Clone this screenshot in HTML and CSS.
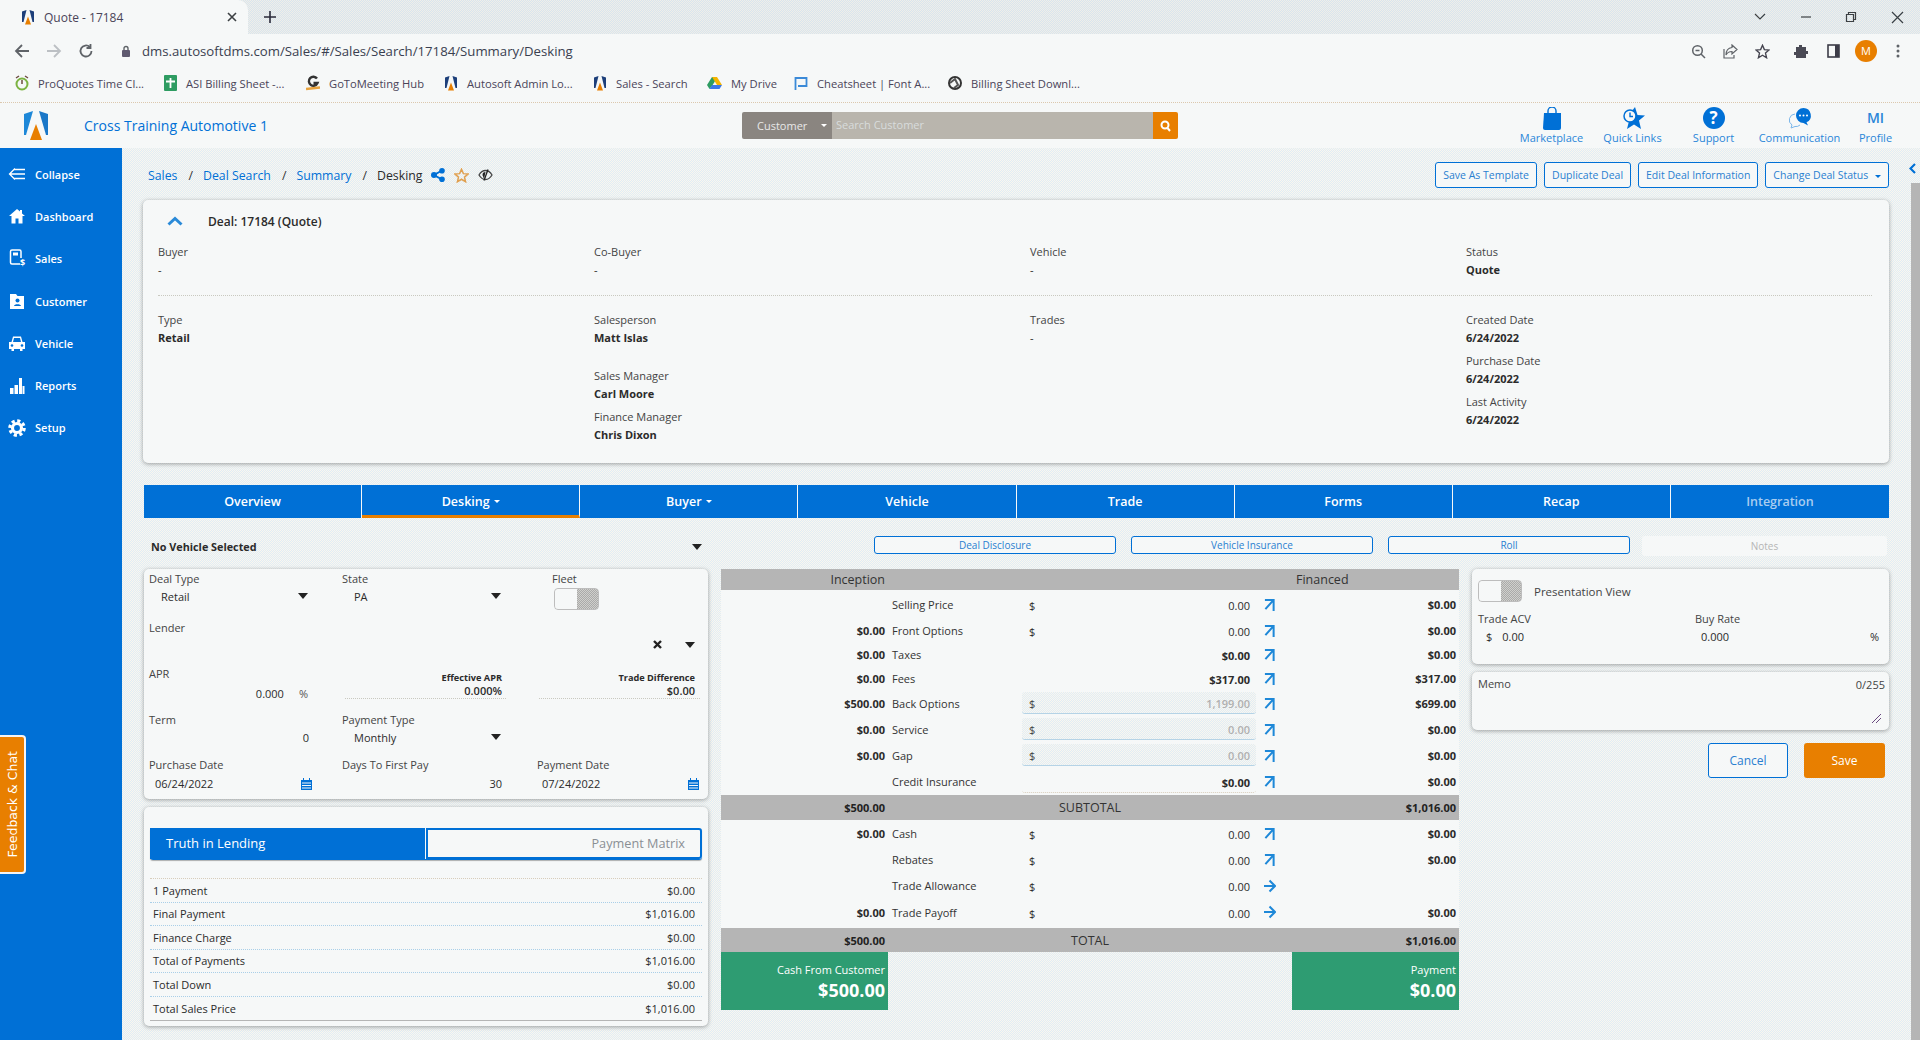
FILE: index.html
```html
<!DOCTYPE html>
<html lang="en">
<head>
  <meta charset="UTF-8" />
  <title>Quote - 17184</title>
  <link rel="stylesheet" href="styles.css">
</head>
<body>
  <svg class="defs" width="0" height="0">
    <symbol id="logo" viewBox="0 0 28 30">
      <path d="M2 3 11 0 4 24 2 24z" fill="#1e88d8"/>
      <path d="M26 3 17 0 24 24 26 24z" fill="#1b78c8"/>
      <path d="M14 13 20 29H8z" fill="#e87f00"/>
    </symbol>
    <symbol id="favicon" viewBox="0 0 28 30">
      <path d="M2 3 11 0 5 24 2 24z" fill="#1d3f7a"/>
      <path d="M26 3 17 0 23 24 26 24z" fill="#1d3f7a"/>
      <path d="M14 13 20 29H8z" fill="#e87f00"/>
    </symbol>
    <symbol id="up-right" viewBox="0 0 12 14">
      <path d="M1 2H10.500V14M10 2.500 1.500 12" fill="none" stroke="#1e88d8" stroke-width="2.200"/>
    </symbol>
    <symbol id="right" viewBox="0 0 12 14">
      <path d="M0 7H10M5.500 1.500 11 7 5.500 12.500" fill="none" stroke="#1e88d8" stroke-width="2"/>
    </symbol>
    <symbol id="calendar" viewBox="0 0 11 12">
      <path d="M0 2H2V0H3V2H8V0H9V2H11V12H0z" fill="#0070d6"/>
      <path d="M1 5H10M1 7.500H10M1 10H10" stroke="#f6f8f8" stroke-width="1"/>
    </symbol>
  </svg>

  <!-- Browser chrome -->
  <div class="tabstrip">
    <div class="tab">
      <svg class="fav" width="14" height="15"><use href="#favicon"/></svg>
      <span class="tab-title">Quote - 17184</span>
      <svg class="tab-close" width="10" height="10" viewBox="0 0 10 10"><path d="M1 1 9 9M9 1 1 9" stroke="#3c4043" stroke-width="1.600"/></svg>
    </div>
    <svg class="tab-new" width="12" height="12" viewBox="0 0 12 12"><path d="M6 0V12M0 6H12" stroke="#2a2a3a" stroke-width="1.600"/></svg>
    <div class="winctl">
      <svg width="12" height="8" viewBox="0 0 12 8"><path d="M1 1 6 6 11 1" fill="none" stroke="#3c4043" stroke-width="1.200"/></svg>
      <svg width="12" height="2" viewBox="0 0 12 2"><path d="M1 1H11" stroke="#3c4043" stroke-width="1.200"/></svg>
      <svg width="12" height="12" viewBox="0 0 12 12"><path d="M1.500 3.500H8.500V10.500H1.500zM3.500 3.500V1.500H10.500V8.500H8.500" fill="none" stroke="#3c4043" stroke-width="1.200"/></svg>
      <svg width="13" height="13" viewBox="0 0 13 13"><path d="M1 1 12 12M12 1 1 12" stroke="#3c4043" stroke-width="1.200"/></svg>
    </div>
  </div>
  <div class="toolbar">
    <svg class="nav-ic" width="16" height="14" viewBox="0 0 16 14"><path d="M15 7H2M8 1 2 7 8 13" fill="none" stroke="#5f6368" stroke-width="1.800"/></svg>
    <svg class="nav-ic" width="16" height="14" viewBox="0 0 16 14"><path d="M1 7H14M8 1 14 7 8 13" fill="none" stroke="#bcc0c4" stroke-width="1.800"/></svg>
    <svg class="nav-ic" width="16" height="16" viewBox="0 0 16 16"><path d="M13.500 8A5.500 5.500 0 1 1 11.800 4M12.500 1V5H8.500" fill="none" stroke="#5f6368" stroke-width="1.800"/></svg>
    <svg class="lock" width="10" height="12" viewBox="0 0 10 12"><path d="M3 5V3.500a2 2 0 0 1 4 0V5" fill="none" stroke="#5f6368" stroke-width="1.400"/><rect x="1" y="5" width="8" height="7" rx="1" fill="#5f5a70"/></svg>
    <span class="url">dms.autosoftdms.com/Sales/#/Sales/Search/17184/Summary/Desking</span>
    <div class="tool-right">
      <svg width="15" height="15" viewBox="0 0 15 15"><circle cx="6.500" cy="6.500" r="4.800" fill="none" stroke="#5f6368" stroke-width="1.500"/><path d="M10 10 14 14M4.500 6.500H8.500" stroke="#5f6368" stroke-width="1.500"/></svg>
      <svg width="15" height="15" viewBox="0 0 15 15"><path d="M9 1 14 5.500 9 10V7.500C6 7.500 4 9 3 11 3 7 5 4 9 3.500zM1 5V14H11V11" fill="none" stroke="#5f6368" stroke-width="1.200"/></svg>
      <svg width="15" height="15" viewBox="0 0 24 24"><path d="M12 2 15 9 22.500 9.600 16.800 14.500 18.500 22 12 18 5.500 22 7.200 14.500 1.500 9.600 9 9z" fill="none" stroke="#44444f" stroke-width="2.200"/></svg>
      <svg class="gap-l" width="14" height="15" viewBox="0 0 14 15"><path d="M5 1h3v2h4v4h2v3h-2v4H2v-3H0V8h2V3h3z" fill="#4a4a55"/></svg>
      <svg class="gap-m" width="13" height="14" viewBox="0 0 13 14"><rect x="1" y="1" width="11" height="12" fill="none" stroke="#3c3c48" stroke-width="1.600"/><rect x="8" y="1" width="4" height="12" fill="#3c3c48"/></svg>
      <span class="avatar">M</span>
      <svg class="kebab" width="4" height="14" viewBox="0 0 4 14"><circle cx="2" cy="2" r="1.500" fill="#5f6368"/><circle cx="2" cy="7" r="1.500" fill="#5f6368"/><circle cx="2" cy="12" r="1.500" fill="#5f6368"/></svg>
    </div>
  </div>
  <div class="bookmarks">
    <a class="bm bm-1"><svg width="14" height="16" viewBox="0 0 14 16"><circle cx="7" cy="9" r="5.500" fill="none" stroke="#7cb342" stroke-width="2"/><path d="M7 5V9" stroke="#6d4c41" stroke-width="1.500"/><path d="M1 3 4 1M13 3 10 1" stroke="#6d4c41" stroke-width="1.500"/></svg>ProQuotes Time Cl...</a>
    <a class="bm bm-2"><svg width="13" height="16" viewBox="0 0 13 16"><rect width="13" height="16" rx="1" fill="#2e9c62"/><path d="M6.500 3V13M2 6.500H11" stroke="#fff" stroke-width="1.800"/></svg>ASI Billing Sheet -...</a>
    <a class="bm bm-3"><svg width="14" height="16" viewBox="0 0 14 16"><path d="M11 3.500A4.500 4.500 0 1 0 11.500 8H7.500" fill="none" stroke="#333" stroke-width="2.400"/><path d="M0 14 14 12.500" stroke="#e8a33d" stroke-width="2.400"/></svg>GoToMeeting Hub</a>
    <a class="bm bm-4"><svg width="14" height="15"><use href="#favicon"/></svg>Autosoft Admin Lo...</a>
    <a class="bm bm-5"><svg width="14" height="15"><use href="#favicon"/></svg>Sales - Search</a>
    <a class="bm bm-6"><svg width="15" height="14" viewBox="0 0 15 14"><path d="M5 1H10L7.500 6 5 10 2.500 13 0 9z" fill="#2e9c62"/><path d="M5 1H10L15 9H10z" fill="#f5b400"/><path d="M2.500 13 5 9H15L12.500 13z" fill="#3b78e7"/></svg>My Drive</a>
    <a class="bm bm-7"><svg width="14" height="15" viewBox="0 0 14 15"><path d="M1.500 14V2H12.500V10H4" fill="none" stroke="#3b8ad8" stroke-width="1.800"/></svg>Cheatsheet | Font A...</a>
    <a class="bm bm-8"><svg width="14" height="14" viewBox="0 0 14 14"><circle cx="7" cy="7" r="6" fill="none" stroke="#333" stroke-width="2"/><path d="M2 7 7 3 10 9 6 12" fill="none" stroke="#555" stroke-width="2"/></svg>Billing Sheet Downl...</a>
  </div>

  <!-- App header -->
  <header class="apphead">
    <svg class="logo" width="28" height="30"><use href="#logo"/></svg>
    <span class="company">Cross Training Automotive 1</span>
    <div class="search">
      <span class="search-type">Customer <i class="caret caret-w"></i></span>
      <span class="search-input">Search Customer</span>
      <span class="search-btn"><svg width="11" height="12" viewBox="0 0 11 12"><circle cx="5" cy="5" r="3.500" fill="none" stroke="#fff" stroke-width="2"/><path d="M7.500 8 10 11" stroke="#fff" stroke-width="2"/></svg></span>
    </div>
    <nav class="topnav">
      <a class="topnav-item w-market"><svg width="20" height="24" viewBox="0 0 20 24"><path d="M6 7V4a4 4 0 0 1 8 0v3" fill="none" stroke="#0070d6" stroke-width="1.400"/><path d="M2 6H19V21a2 2 0 0 1-2 2H3a2 2 0 0 1-2-2z" fill="#0070d6"/></svg><span>Marketplace</span></a>
      <a class="topnav-item w-quick"><svg width="26" height="24" viewBox="0 0 26 24"><path d="M15 0 17.500 8 25 8.500 19 13.500 21 22 14 17.500 7 22 9 14 5 11 9 8z" fill="#0070d6"/><circle cx="10" cy="9" r="6" fill="#f6f8f8" stroke="#0070d6" stroke-width="1.500"/><path d="M10 5.500V9.500H13" fill="none" stroke="#0070d6" stroke-width="1.400"/></svg><span>Quick Links</span></a>
      <a class="topnav-item w-support"><span class="help-ic">?</span><span>Support</span></a>
      <a class="topnav-item w-comm"><svg width="24" height="22" viewBox="0 0 24 22"><path d="M7 7a6 6 0 0 0-3 11L3 21 7 19.500A6 6 0 0 0 12 18" fill="none" stroke="#7ab6ea" stroke-width="1"/><path d="M15.500 1a7.500 7.500 0 0 1 3 14.300L20 18.500 15.500 16a7.500 7.500 0 0 1 0-15z" fill="#0070d6"/><circle cx="12" cy="8.500" r="1" fill="#fff"/><circle cx="15.500" cy="8.500" r="1" fill="#fff"/><circle cx="19" cy="8.500" r="1" fill="#fff"/></svg><span>Communication</span></a>
      <a class="topnav-item w-profile"><b class="initials">MI</b><span>Profile</span></a>
    </nav>
  </header>

  <div class="appbody">
    <aside class="sidebar">
      <a class="side-item"><svg width="18" height="14" viewBox="0 0 18 14"><path d="M7 1.500 1.500 7 7 12.500M2 7H17M6 2.500H17M6 11.500H17" fill="none" stroke="#fff" stroke-width="1.300"/></svg>Collapse</a>
      <a class="side-item"><svg width="16" height="16" viewBox="0 0 16 16"><path d="M8 1 0 8H2.500V15.500H6.500V10.500H9.500V15.500H13.500V8H16L13 5.500V2H11V3.500z" fill="#fff"/></svg>Dashboard</a>
      <a class="side-item"><svg width="16" height="19" viewBox="0 0 16 19"><path d="M11 15H3a1.500 1.500 0 0 1-1.500-1.500V2.500A1.500 1.500 0 0 1 3 1H10.500A1.500 1.500 0 0 1 12 2.500V9" fill="none" stroke="#fff" stroke-width="1.500"/><rect x="4" y="3.500" width="5" height="3" fill="#fff"/><text x="11" y="17" class="side-dollar">$</text></svg>Sales</a>
      <a class="side-item"><svg width="16" height="15" viewBox="0 0 16 15"><path d="M1 0H7L8.500 2H15V15H1z" fill="#fff"/><circle cx="8.500" cy="6.500" r="2" fill="#0070d6"/><path d="M5 12C5 9.500 12 9.500 12 12z" fill="#0070d6"/></svg>Customer</a>
      <a class="side-item"><svg width="17" height="16" viewBox="0 0 17 16"><path d="M3 7 4.500 1.500H12.500L14 7H16.500V14H14V16H11.500V14H5.500V16H3V14H.5V7z" fill="#fff"/><path d="M4.500 7 5.500 3H11.500L12.500 7z" fill="#0070d6"/><circle cx="3.500" cy="10.500" r="1.300" fill="#0070d6"/><circle cx="13.500" cy="10.500" r="1.300" fill="#0070d6"/></svg>Vehicle</a>
      <a class="side-item"><svg width="16" height="18" viewBox="0 0 16 18"><path d="M1 11H4.500V17H1zM5.500 8H9V17H5.500zM10 1H13V17H10zM13.500 9H15.500V17H13.500z" fill="#fff"/></svg>Reports</a>
      <a class="side-item"><svg width="20" height="20" viewBox="0 0 20 20"><circle cx="10" cy="10" r="8" fill="none" stroke="#fff" stroke-width="3.500" stroke-dasharray="3.500 2.780"/><circle cx="10" cy="10" r="5" fill="none" stroke="#fff" stroke-width="3.500"/></svg>Setup</a>
    </aside>

    <div class="feedback"><span>Feedback &amp; Chat</span></div>

    <main class="main">
      <div class="pagebar">
        <div class="crumbs">
          <a>Sales</a><i>/</i><a>Deal Search</a><i>/</i><a>Summary</a><i>/</i><span>Desking</span>
          <svg class="crumb-ic" width="14" height="14" viewBox="0 0 14 14"><path d="M11 2.500 3 7 11 11.500" fill="none" stroke="#0070d6" stroke-width="2"/><circle cx="11" cy="2.800" r="2.800" fill="#0070d6"/><circle cx="3" cy="7" r="3" fill="#0070d6"/><circle cx="11" cy="11.200" r="2.800" fill="#0070d6"/></svg>
          <svg class="crumb-ic" width="15" height="15" viewBox="0 0 24 24"><path d="M12 2 15 9 22.500 9.600 16.800 14.500 18.500 22 12 18 5.500 22 7.200 14.500 1.500 9.600 9 9z" fill="none" stroke="#e0a050" stroke-width="2.400"/></svg>
          <svg class="crumb-ic" width="15" height="12" viewBox="0 0 15 12"><path d="M1 6C3 2.500 5 1.500 7.500 1.500S12 2.500 14 6C12 9.500 10 10.500 7.500 10.500S3 9.500 1 6z" fill="none" stroke="#444" stroke-width="1.300"/><path d="M4.500 6a3 3 0 0 1 3-3L6 10z" fill="#222"/><path d="M10 .5 6 11.500" stroke="#222" stroke-width="1.300"/></svg>
        </div>
        <div class="page-actions">
          <button class="btn-o">Save As Template</button>
          <button class="btn-o">Duplicate Deal</button>
          <button class="btn-o">Edit Deal Information</button>
          <button class="btn-o">Change Deal Status <i class="caret caret-b"></i></button>
        </div>
      </div>

      <section class="card deal">
        <div class="deal-title">
          <svg width="16" height="10" viewBox="0 0 16 10"><path d="M1.500 8.500 8 2.500 14.500 8.500" fill="none" stroke="#2a8ad8" stroke-width="3"/></svg>
          <b>Deal: 17184 (Quote)</b>
        </div>
        <div class="deal-row">
          <div><div class="info"><label>Buyer</label><p>-</p></div></div>
          <div><div class="info"><label>Co-Buyer</label><p>-</p></div></div>
          <div><div class="info"><label>Vehicle</label><p>-</p></div></div>
          <div><div class="info"><label>Status</label><p class="strong">Quote</p></div></div>
        </div>
        <hr class="dots">
        <div class="deal-row">
          <div><div class="info"><label>Type</label><p class="strong">Retail</p></div></div>
          <div>
            <div class="info"><label>Salesperson</label><p class="strong">Matt Islas</p></div>
            <div class="info info-far"><label>Sales Manager</label><p class="strong">Carl Moore</p></div>
            <div class="info"><label>Finance Manager</label><p class="strong">Chris Dixon</p></div>
          </div>
          <div><div class="info"><label>Trades</label><p>-</p></div></div>
          <div>
            <div class="info"><label>Created Date</label><p class="strong">6/24/2022</p></div>
            <div class="info"><label>Purchase Date</label><p class="strong">6/24/2022</p></div>
            <div class="info"><label>Last Activity</label><p class="strong">6/24/2022</p></div>
          </div>
        </div>
      </section>

      <div class="tabs">
        <a class="tb">Overview</a>
        <a class="tb tb-active">Desking <i class="caret caret-w"></i></a>
        <a class="tb">Buyer <i class="caret caret-w"></i></a>
        <a class="tb">Vehicle</a>
        <a class="tb">Trade</a>
        <a class="tb">Forms</a>
        <a class="tb">Recap</a>
        <a class="tb tb-off">Integration</a>
      </div>

      <div class="desk">
        <div class="desk-left">
          <div class="vehicle-pick"><b>No Vehicle Selected</b><i class="arrow"></i></div>

          <section class="card form">
            <div class="form-row row-1">
              <div class="fld"><label>Deal Type</label><div class="sel"><span>Retail</span><i class="arrow"></i></div></div>
              <div class="fld"><label>State</label><div class="sel"><span>PA</span><i class="arrow"></i></div></div>
              <div class="fld fld-fleet"><label>Fleet</label><span class="toggle"><i></i></span></div>
            </div>
            <div class="form-row row-2">
              <div class="fld fld-lender">
                <label>Lender</label>
                <div class="lender-ctl">
                  <svg width="9" height="9" viewBox="0 0 9 9"><path d="M1 1 8 8M8 1 1 8" stroke="#222" stroke-width="2.400"/></svg>
                  <i class="arrow"></i>
                </div>
              </div>
            </div>
            <div class="form-row row-3">
              <div class="fld"><label>APR</label><div class="apr"><span>0.000</span><em>%</em></div></div>
              <div class="fld calc"><b>Effective APR</b><strong>0.000%</strong></div>
              <div class="fld calc"><b>Trade Difference</b><strong>$0.00</strong></div>
            </div>
            <div class="form-row row-4">
              <div class="fld"><label>Term</label><div class="term">0</div></div>
              <div class="fld"><label>Payment Type</label><div class="sel"><span>Monthly</span><i class="arrow"></i></div></div>
            </div>
            <div class="form-row row-5">
              <div class="fld"><label>Purchase Date</label><div class="date"><span>06/24/2022</span><svg width="11" height="12"><use href="#calendar"/></svg></div></div>
              <div class="fld"><label>Days To First Pay</label><div class="days">30</div></div>
              <div class="fld"><label>Payment Date</label><div class="date date-r"><span>07/24/2022</span><svg width="11" height="12"><use href="#calendar"/></svg></div></div>
            </div>
          </section>

          <section class="card lending">
            <div class="seg">
              <a class="seg-on">Truth in Lending</a>
              <a class="seg-off">Payment Matrix</a>
            </div>
            <ul class="til">
              <li><span>1 Payment</span><span>$0.00</span></li>
              <li><span>Final Payment</span><span>$1,016.00</span></li>
              <li><span>Finance Charge</span><span>$0.00</span></li>
              <li><span>Total of Payments</span><span>$1,016.00</span></li>
              <li><span>Total Down</span><span>$0.00</span></li>
              <li><span>Total Sales Price</span><span>$1,016.00</span></li>
            </ul>
          </section>
        </div>

        <div class="desk-right">
          <div class="doc-actions">
            <button class="btn-doc">Deal Disclosure</button>
            <button class="btn-doc">Vehicle Insurance</button>
            <button class="btn-doc">Roll</button>
            <button class="btn-doc btn-doc-off">Notes</button>
          </div>

          <div class="desk-columns">
            <div class="sheet">
              <div class="band band-head"><span>Inception</span><span></span><span class="band-fin">Financed</span></div>
              <div class="lines lines-a">
                <div class="line"><b></b><span class="nm">Selling Price</span><span class="amt"><em>$</em><u>0.00</u></span><svg width="11" height="13"><use href="#up-right"/></svg><b>$0.00</b></div>
                <div class="line"><b>$0.00</b><span class="nm">Front Options</span><span class="amt"><em>$</em><u>0.00</u></span><svg width="11" height="13"><use href="#up-right"/></svg><b>$0.00</b></div>
                <div class="line"><b>$0.00</b><span class="nm">Taxes</span><span class="amt"><em></em><strong>$0.00</strong></span><svg width="11" height="13"><use href="#up-right"/></svg><b>$0.00</b></div>
                <div class="line"><b>$0.00</b><span class="nm">Fees</span><span class="amt"><em></em><strong>$317.00</strong></span><svg width="11" height="13"><use href="#up-right"/></svg><b>$317.00</b></div>
                <div class="line"><b>$500.00</b><span class="nm">Back Options</span><span class="amt amt-off"><em>$</em><u>1,199.00</u></span><svg width="11" height="13"><use href="#up-right"/></svg><b>$699.00</b></div>
                <div class="line"><b>$0.00</b><span class="nm">Service</span><span class="amt amt-off"><em>$</em><u>0.00</u></span><svg width="11" height="13"><use href="#up-right"/></svg><b>$0.00</b></div>
                <div class="line"><b>$0.00</b><span class="nm">Gap</span><span class="amt amt-off"><em>$</em><u>0.00</u></span><svg width="11" height="13"><use href="#up-right"/></svg><b>$0.00</b></div>
                <div class="line"><b></b><span class="nm">Credit Insurance</span><span class="amt amt-line"><em></em><strong>$0.00</strong></span><svg width="11" height="13"><use href="#up-right"/></svg><b>$0.00</b></div>
              </div>
              <div class="band band-sub"><b>$500.00</b><span>SUBTOTAL</span><b>$1,016.00</b></div>
              <div class="lines lines-b">
                <div class="line"><b>$0.00</b><span class="nm">Cash</span><span class="amt"><em>$</em><u>0.00</u></span><svg width="11" height="13"><use href="#up-right"/></svg><b>$0.00</b></div>
                <div class="line"><b></b><span class="nm">Rebates</span><span class="amt"><em>$</em><u>0.00</u></span><svg width="11" height="13"><use href="#up-right"/></svg><b>$0.00</b></div>
                <div class="line"><b></b><span class="nm">Trade Allowance</span><span class="amt"><em>$</em><u>0.00</u></span><svg width="12" height="14"><use href="#right"/></svg><b></b></div>
                <div class="line"><b>$0.00</b><span class="nm">Trade Payoff</span><span class="amt"><em>$</em><u>0.00</u></span><svg width="12" height="14"><use href="#right"/></svg><b>$0.00</b></div>
              </div>
              <div class="band band-total"><b>$500.00</b><span>TOTAL</span><b>$1,016.00</b></div>
              <div class="totals">
                <div class="due"><span>Cash From Customer</span><b>$500.00</b></div>
                <div class="due"><span>Payment</span><b>$0.00</b></div>
              </div>
            </div>

            <div class="side">
              <section class="card present">
                <div class="present-top"><span class="toggle"><i></i></span><span class="present-name">Presentation View</span></div>
                <div class="present-fields">
                  <div><label>Trade ACV</label><p class="acv"><span>$</span><span>0.00</span></p></div>
                  <div><label>Buy Rate</label><p class="rate"><span>0.000</span><span>%</span></p></div>
                </div>
              </section>
              <section class="card memo">
                <div class="memo-top"><label>Memo</label><span>0/255</span></div>
                <svg class="memo-grip" width="9" height="9" viewBox="0 0 9 9"><path d="M0 9 9 0M4 9 9 4" stroke="#6a4a80" stroke-width="1"/></svg>
              </section>
              <div class="form-actions">
                <button class="btn-cancel">Cancel</button>
                <button class="btn-save">Save</button>
              </div>
            </div>
          </div>
        </div>
      </div>
    </main>

    <div class="rail">
      <svg class="rail-chev" width="7" height="11" viewBox="0 0 7 11"><path d="M6 1 1.500 5.500 6 10" fill="none" stroke="#0070d6" stroke-width="2.200"/></svg>
      <div class="rail-thumb"></div>
    </div>
  </div>
</body>
</html>
```

FILE: styles.css
```css
* {
  box-sizing: border-box;
}
html, body {
  margin: 0;
  height: 1040px;
  overflow: hidden;
}
body {
  font-family: "Open Sans", "Noto Sans", sans-serif;
  font-size: 11px;
  color: #2b2b2b;
  background: #f6f8f8;
  display: flex;
  flex-direction: column;
}
p, ul {
  margin: 0;
  padding: 0;
}
i, em, u {
  font-style: normal;
  text-decoration: none;
}
label {
  display: block;
  color: #444;
  font-size: 11px;
  line-height: 14px;
}
svg {
  display: block;
  flex: none;
}
.defs {
  position: absolute;
}

/* browser chrome */
.tabstrip {
  height: 34px;
  display: flex;
  align-items: flex-end;
  background: repeating-conic-gradient(#d8e5ee 0 25%, #f0eee9 0 50%) 0 0 / 2px 2px;
}
.tab {
  width: 248px;
  height: 34px;
  padding: 0 11px 0 21px;
  display: flex;
  align-items: center;
  background: #f6f8f8;
  border-radius: 0 10px 0 0;
}
.tab-title {
  margin-left: 9px;
  flex: 1;
  font-size: 12px;
  color: #4a4458;
}
.tab-new {
  margin: 0 0 11px 16px;
}
.winctl {
  margin-left: auto;
  height: 34px;
  width: 166px;
  padding-right: 16px;
  display: flex;
  align-items: center;
  justify-content: space-between;
}
.toolbar {
  height: 34px;
  display: flex;
  align-items: center;
  padding-left: 14px;
}
.nav-ic {
  margin-right: 16px;
}
.lock {
  margin-left: 11px;
}
.url {
  margin-left: 11px;
  font-size: 13.200px;
  color: #3a3f50;
}
.tool-right {
  margin-left: auto;
  padding-right: 20px;
  display: flex;
  align-items: center;
  gap: 17px;
}
.gap-l {
  margin-left: 7px;
}
.gap-m {
  margin-left: 2px;
}
.avatar {
  width: 22px;
  height: 22px;
  margin-left: -2px;
  border-radius: 50%;
  background: #e87f00;
  color: #fff;
  font-size: 11px;
  line-height: 22px;
  text-align: center;
}
.kebab {
  margin-left: 2px;
}
.bookmarks {
  height: 35px;
  padding: 0 0 4px 15px;
  display: flex;
  align-items: center;
  border-bottom: 1px dotted #dcc8ae;
}
.bm {
  display: flex;
  align-items: center;
  gap: 9px;
  font-size: 11.200px;
  color: #4a4458;
  white-space: nowrap;
}
.bm-1 { width: 149px; }
.bm-2 { width: 142px; }
.bm-3 { width: 138px; }
.bm-4 { width: 149px; }
.bm-5 { width: 114px; }
.bm-6 { width: 87px; }
.bm-7 { width: 154px; }

/* app header */
.apphead {
  height: 45px;
  padding-left: 22px;
  display: flex;
  align-items: center;
}
.company {
  width: 658px;
  margin-left: 34px;
  font-size: 14px;
  color: #0070d6;
}
.search {
  width: 436px;
  height: 27px;
  display: flex;
  font-size: 11px;
  color: #e8e8e8;
  line-height: 25px;
  border-radius: 2px;
  overflow: hidden;
}
.search-type {
  width: 90px;
  padding: 0 5px 0 15px;
  display: flex;
  align-items: center;
  justify-content: space-between;
  background: #8a8580;
}
.search-input {
  flex: 1;
  padding-left: 4px;
  background: #b9b5ad;
  color: #d8dcdc;
}
.search-btn {
  width: 25px;
  display: flex;
  align-items: center;
  justify-content: center;
  background: #e87f00;
}
.topnav {
  margin-left: auto;
  padding-right: 14px;
  display: flex;
  align-items: flex-end;
  color: #2a86d8;
  font-size: 11px;
}
.topnav-item {
  display: flex;
  flex-direction: column;
  align-items: center;
  height: 38px;
  justify-content: space-between;
}
.w-market { width: 81px; }
.w-quick { width: 81px; }
.w-support { width: 81px; }
.w-comm { width: 91px; }
.w-profile { width: 61px; }
.topnav-item span {
  line-height: 14px;
}
.help-ic {
  width: 22px;
  height: 22px;
  border-radius: 50%;
  background: #0070d6;
  color: #fff;
  font-size: 17px;
  font-weight: 700;
  text-align: center;
  line-height: 22px !important;
}
.initials {
  font-size: 14px;
  font-weight: 600;
  color: #2a86d8;
  line-height: 22px;
}

/* layout */
.appbody {
  flex: 1;
  display: flex;
  min-height: 0;
  position: relative;
  background: repeating-conic-gradient(#e0edf5 0 25%, #faf6ef 0 50%) 0 0 / 2px 2px;
}
.sidebar {
  width: 122px;
  padding-top: 5px;
  background: #0070d6;
}
.side-item {
  height: 42.300px;
  padding-left: 8px;
  display: flex;
  align-items: center;
  gap: 9px;
  color: #fff;
  font-size: 11px;
  font-weight: 600;
  white-space: nowrap;
}
.side-item svg {
  width: 18px;
}
.side-dollar {
  font-size: 9px;
  font-weight: 700;
  fill: #fff;
}
.feedback {
  position: absolute;
  left: 0;
  top: 587px;
  width: 26px;
  height: 139px;
  background: #e87f00;
  border: 2px solid #f4f4f4;
  border-left: 0;
  border-radius: 0 4px 4px 0;
  display: flex;
  align-items: center;
  justify-content: center;
}
.feedback span {
  writing-mode: vertical-rl;
  transform: rotate(180deg);
  font-family: "DejaVu Sans", sans-serif;
  font-size: 12.500px;
  color: #fff;
  white-space: nowrap;
}
.main {
  flex: 1;
  min-width: 0;
  padding: 14px 22px 0;
}
.rail {
  width: 9px;
  display: flex;
  flex-direction: column;
}
.rail-chev {
  height: 35px;
  margin-left: -2px;
  padding: 15px 0 9px;
  width: 7px;
}
.rail-thumb {
  flex: 1;
  background: #b5b5b5;
}

/* breadcrumb row */
.pagebar {
  height: 26px;
  display: flex;
  align-items: center;
  justify-content: space-between;
}
.crumbs {
  margin-left: 4px;
  display: flex;
  align-items: center;
  font-size: 12.300px;
}
.crumbs a {
  color: #0070d6;
}
.crumbs i {
  margin: 0 10px 0 11px;
  color: #333;
}
.crumb-ic {
  margin-left: 9px;
}
.page-actions {
  display: flex;
  gap: 7px;
}
.btn-o {
  height: 26px;
  padding: 0 7px;
  font: 10.500px "Open Sans", sans-serif;
  color: #2a7fd0;
  background: #f6f8f8;
  border: 1px solid #0070d6;
  border-radius: 3px;
  white-space: nowrap;
}

/* cards */
.card {
  background: #f6f8f8;
  border-radius: 5px;
  box-shadow: 0 1px 4px rgba(0, 0, 0, 0.35);
}
.deal {
  height: 263px;
  margin: 12px 0 0 -1px;
  padding: 12px 17px 0 15px;
}
.deal-title {
  height: 18px;
  display: flex;
  align-items: center;
  font-size: 12px;
}
.deal-title svg {
  margin-left: 9px;
}
.deal-title b {
  margin-left: 25px;
  font-weight: 600;
}
.deal-row {
  display: grid;
  grid-template-columns: repeat(4, 436px);
}
.deal-title + .deal-row {
  margin-top: 15px;
}
.dots {
  height: 0;
  margin: 18px 0 17px;
  border: 0;
  border-top: 1px dotted #c9c9c0;
}
.info label,
.info p {
  line-height: 14px;
}
.info p {
  margin-top: 4px;
}
.info + .info {
  margin-top: 9px;
}
.info + .info-far {
  margin-top: 24px;
}
.strong {
  font-weight: 700;
  color: #2b2b2b;
}

/* tabs */
.tabs {
  height: 33px;
  margin-top: 22px;
  display: grid;
  grid-template-columns: repeat(8, 1fr);
  background: #0070d6;
}
.tb {
  display: flex;
  align-items: center;
  justify-content: center;
  gap: 3px;
  color: #fff;
  font-size: 12.500px;
  font-weight: 600;
  border-right: 1px solid #f6f8f8;
}
.tb:last-child {
  border-right: 0;
}
.tb-active {
  border-bottom: 3px solid #e87f00;
  padding-top: 3px;
}
.tb-off {
  color: #a9cdf0;
}
.caret {
  display: inline-block;
  border: 3px solid transparent;
  border-bottom: 0;
  border-top-width: 3px;
  vertical-align: middle;
}
.caret-w {
  border-top-color: #fff;
  margin-left: 1px;
}
.caret-b {
  border-top-color: #0070d6;
  margin-left: 4px;
}
.arrow {
  display: block;
  width: 0;
  height: 0;
  border: 5.500px solid transparent;
  border-top: 6px solid #222;
  border-bottom: 0;
}

/* desking */
.desk {
  margin-top: 11px;
  display: flex;
  gap: 13px;
}
.desk-left {
  width: 564px;
  flex: none;
}
.desk-right {
  flex: 1;
  min-width: 0;
}
.vehicle-pick {
  height: 35px;
  padding: 0 6px 0 7px;
  display: flex;
  align-items: center;
  justify-content: space-between;
}
.vehicle-pick b {
  font-size: 10.800px;
  font-weight: 700;
}
.form {
  height: 230px;
  margin-top: 5px;
  padding: 3px 5px 0;
}
.form-row {
  display: grid;
  grid-template-columns: 193px 195px 1fr;
}
.row-1 { height: 49px; }
.row-2 { height: 46px; }
.row-3 { height: 46px; }
.row-4 { height: 45px; }
.sel {
  width: 159px;
  height: 14px;
  margin-top: 3px;
  padding-left: 12px;
  display: flex;
  align-items: center;
  justify-content: space-between;
}
.fld-fleet {
  padding-left: 15px;
}
.toggle {
  display: block;
  width: 45px;
  height: 22px;
  margin: 2px 0 0 2px;
  background: repeating-conic-gradient(#aaa 0 25%, #d0d0cc 0 50%) 0 0 / 2px 2px;
  border: 1px solid #bdbdbd;
  border-radius: 4px;
  overflow: hidden;
}
.toggle i {
  display: block;
  width: 22px;
  height: 20px;
  background: #f6f8f8;
}
.fld-lender {
  grid-column: 1 / -1;
}
.lender-ctl {
  margin-top: 5px;
  padding-right: 8px;
  display: flex;
  justify-content: flex-end;
  align-items: center;
  gap: 23px;
}
.apr {
  width: 159px;
  margin-top: 5px;
  display: flex;
  justify-content: flex-end;
}
.apr span {
  margin-right: 15px;
}
.apr em {
  color: #555;
}
.calc {
  display: flex;
  flex-direction: column;
  align-items: flex-end;
  padding-top: 4px;
  height: 33px;
  line-height: 13px;
}
.calc b {
  font-size: 9.200px;
  font-weight: 700;
}
.calc strong {
  font-weight: 600;
}
.calc::after {
  content: "";
  display: block;
  width: 161px;
  margin: 1px -4px 0 0;
  border-bottom: 1px dotted #c9c9c0;
}
.form-row .calc:nth-child(2) {
  padding-right: 35px;
}
.form-row .calc:nth-child(3) {
  padding-right: 8px;
}
.form-row .calc:nth-child(3)::after {
  margin-right: -5px;
}
.term {
  width: 160px;
  margin-top: 4px;
  text-align: right;
  line-height: 14px;
}
.date {
  width: 163px;
  margin-top: 5px;
  padding-left: 6px;
  display: flex;
  justify-content: space-between;
  align-items: center;
  line-height: 14px;
}
.date-r {
  width: 162px;
  padding-left: 5px;
}
.days {
  width: 160px;
  margin-top: 5px;
  text-align: right;
  line-height: 14px;
}
.lending {
  height: 219px;
  margin-top: 8px;
  padding: 21px 6px 0;
}
.seg {
  height: 32px;
  display: flex;
  border-bottom: 1px solid #0070d6;
  box-shadow: 0 1px 1px rgba(0, 0, 0, 0.3);
  border-radius: 3px;
  font-size: 13px;
  line-height: 30px;
}
.seg-on {
  width: 275px;
  padding-left: 16px;
  background: #0070d6;
  color: #fff;
}
.seg-off {
  flex: 1;
  margin-left: 1px;
  padding-right: 15px;
  font-size: 12.700px;
  line-height: 27px;
  text-align: right;
  color: #8a8f94;
  border: 2px solid #0070d6;
  border-radius: 0 3px 3px 0;
}
.til {
  margin-top: 18px;
  list-style: none;
  border-top: 1px dotted #d8cdbb;
  border-bottom: 1px solid #b5b5b5;
}
.til li {
  height: 23.500px;
  padding: 0 7px 0 3px;
  display: flex;
  align-items: center;
  justify-content: space-between;
  border-bottom: 1px dotted #a9cfe8;
}
.til li:last-child {
  border-bottom: 0;
}
.doc-actions {
  height: 39px;
  padding: 7px 0 0 153px;
  display: flex;
  gap: 15px;
  align-items: flex-start;
}
.btn-doc {
  width: 242px;
  height: 18px;
  padding: 0;
  font: 10px "Open Sans", sans-serif;
  color: #2a7fd0;
  background: #f6f8f8;
  border: 1px solid #0070d6;
  border-radius: 3px;
}
.btn-doc-off {
  width: 245px;
  height: 20px;
  margin-left: -3px;
  color: #b5b5b5;
  border-color: transparent;
}
.desk-columns {
  margin-top: 1px;
  display: flex;
  gap: 13px;
}
.sheet {
  width: 738px;
  flex: none;
}
.band {
  display: grid;
  grid-template-columns: 167px 1fr 167px;
  align-items: center;
  background: #b5b5b5;
  color: #333;
  font-size: 12.500px;
  text-align: right;
}
.band b {
  font-size: 11px;
  font-weight: 700;
  color: #222;
  padding-right: 3px;
}
.band span {
  text-align: center;
}
.band-head {
  height: 21px;
}
.band-head span:first-child {
  text-align: right;
  padding-right: 3px;
}
.band-head .band-fin {
  text-align: left;
  padding-left: 4px;
}
.band-sub {
  height: 25px;
}
.band-total {
  height: 24px;
}
.lines {
  display: grid;
  grid-template-columns: 167px 134px 234px 30px 1fr;
  background: #f6f8f8;
}
.lines-a {
  grid-template-rows: 28px 25px 23px 24px 26px 26px 26px 27px;
}
.lines-b {
  grid-template-rows: 27px 25px 27px 26px 3px;
}
.line {
  display: contents;
}
.line > * {
  align-self: center;
}
.line b {
  text-align: right;
  font-weight: 700;
  color: #2b2b2b;
  padding-right: 3px;
}
.line svg {
  margin-left: 8px;
}
.nm {
  padding-left: 4px;
  color: #333;
}
.amt {
  height: 22px;
  padding: 2px 6px 0 7px;
  display: flex;
  align-items: center;
  justify-content: space-between;
  border-radius: 3px;
}
.amt strong {
  font-weight: 700;
}
.amt-off {
  color: #b0b0b0;
  font-weight: 600;
  background: repeating-conic-gradient(#e0edf5 0 25%, #faf6ef 0 50%) 0 0 / 2px 2px;
  border-bottom: 1px solid #b5d3e6;
}
.amt-off em {
  color: #444;
  font-weight: 400;
}
.amt-line {
  border-bottom: 1px dotted #d8cdbb;
}
.totals {
  display: flex;
  justify-content: space-between;
}
.due {
  width: 167px;
  height: 58px;
  padding: 11px 3px 0 0;
  display: flex;
  flex-direction: column;
  align-items: flex-end;
  background: #2e9c72;
  color: #fff;
}
.due span {
  line-height: 14px;
}
.due b {
  font-size: 18px;
  font-weight: 700;
  line-height: 26px;
}
.side {
  flex: 1;
  min-width: 0;
}
.present {
  height: 95px;
  padding: 11px 6px 0 6px;
}
.present-top {
  display: flex;
  align-items: center;
}
.present-top .toggle {
  width: 44px;
  margin: 0;
}
.present-name {
  margin-left: 12px;
  font-size: 11.500px;
  color: #444;
}
.present-fields {
  margin-top: 10px;
  display: grid;
  grid-template-columns: 217px 1fr;
}
.acv,
.rate {
  margin-top: 4px;
  display: flex;
  line-height: 14px;
}
.acv {
  padding-left: 8px;
  gap: 10px;
}
.rate {
  padding: 0 4px 0 6px;
  justify-content: space-between;
}
.memo {
  height: 58px;
  margin-top: 8px;
  padding: 5px 4px 0 6px;
  position: relative;
}
.memo-top {
  display: flex;
  justify-content: space-between;
  color: #444;
}
.memo-grip {
  position: absolute;
  right: 8px;
  bottom: 7px;
}
.form-actions {
  margin-top: 13px;
  padding-right: 4px;
  display: flex;
  justify-content: flex-end;
  gap: 16px;
}
.form-actions button {
  height: 35px;
  font: 12px "Open Sans", sans-serif;
  border-radius: 3px;
}
.btn-cancel {
  width: 80px;
  color: #2a7fd0;
  background: #f6f8f8;
  border: 1px solid #0070d6;
}
.btn-save {
  width: 81px;
  color: #fff;
  background: #e87f00;
  border: 0;
}
```
